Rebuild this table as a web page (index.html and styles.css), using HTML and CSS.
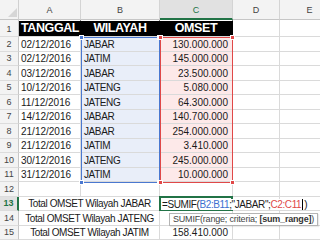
FILE: index.html
```html
<!DOCTYPE html>
<html>
<head>
<meta charset="utf-8">
<link rel="stylesheet" href="styles.css">
</head>
<body>
<div class="wrap">
  <div class="sheet">
    <div class="corner"><svg width="18" height="19" viewBox="0 0 18 19"><polygon points="8,17 17,17 17,8" fill="#d6d6d6"/></svg></div>
    <div class="ch">A</div><div class="ch">B</div><div class="ch sel">C</div><div class="ch">D</div><div class="ch">E</div>

    <div class="rh">1</div>
    <div class="c hd">TANGGAL</div><div class="c hd center">WILAYAH</div><div class="c hd center">OMSET</div><div class="c"></div><div class="c"></div>

    <div class="rh">2</div>
    <div class="c">02/12/2016</div><div class="c t rb">JABAR</div><div class="c num rc">130.000.000</div><div class="c"></div><div class="c"></div>
    <div class="rh">3</div>
    <div class="c">02/12/2016</div><div class="c t rb">JATIM</div><div class="c num rc">145.000.000</div><div class="c"></div><div class="c"></div>
    <div class="rh">4</div>
    <div class="c">03/12/2016</div><div class="c t rb">JABAR</div><div class="c num rc">23.500.000</div><div class="c"></div><div class="c"></div>
    <div class="rh">5</div>
    <div class="c">10/12/2016</div><div class="c t rb">JATENG</div><div class="c num rc">5.080.000</div><div class="c"></div><div class="c"></div>
    <div class="rh">6</div>
    <div class="c">11/12/2016</div><div class="c t rb">JATENG</div><div class="c num rc">64.300.000</div><div class="c"></div><div class="c"></div>
    <div class="rh">7</div>
    <div class="c">14/12/2016</div><div class="c t rb">JABAR</div><div class="c num rc">140.700.000</div><div class="c"></div><div class="c"></div>
    <div class="rh">8</div>
    <div class="c">21/12/2016</div><div class="c t rb">JABAR</div><div class="c num rc">254.000.000</div><div class="c"></div><div class="c"></div>
    <div class="rh">9</div>
    <div class="c">21/12/2016</div><div class="c t rb">JATIM</div><div class="c num rc">3.410.000</div><div class="c"></div><div class="c"></div>
    <div class="rh">10</div>
    <div class="c">30/12/2016</div><div class="c t rb">JATENG</div><div class="c num rc">245.000.000</div><div class="c"></div><div class="c"></div>
    <div class="rh">11</div>
    <div class="c">31/12/2016</div><div class="c t rb">JATIM</div><div class="c num rc">10.000.000</div><div class="c"></div><div class="c"></div>

    <div class="rh">12</div>
    <div class="c"></div><div class="c"></div><div class="c"></div><div class="c"></div><div class="c"></div>

    <div class="rh rsel">13</div>
    <div class="c merge t center">Total OMSET Wilayah JABAR</div><div class="c"></div><div class="c"></div><div class="c"></div>
    <div class="rh">14</div>
    <div class="c merge t center">Total OMSET Wilayah JATENG</div><div class="c"></div><div class="c"></div><div class="c"></div>
    <div class="rh">15</div>
    <div class="c merge t center">Total OMSET Wilayah JATIM</div><div class="c num">158.410.000</div><div class="c"></div><div class="c"></div>
  </div>

  <div class="layer">
    <div class="range range-b"><i class="hdl tl"></i><i class="hdl tr"></i><i class="hdl bl"></i><i class="hdl br"></i></div>
    <div class="range range-c"><i class="hdl tl"></i><i class="hdl tr"></i><i class="hdl bl"></i><i class="hdl br"></i></div>
    <div class="active"></div>
    <div class="editor">=SUMIF(<span class="ref-b">B2:B11</span>;"JABAR";<span class="ref-c">C2:C11</span><span class="caret"></span>)</div>
    <div class="tip">SUMIF(range; criteria; <b>[sum_range]</b>)</div>
  </div>
</div>
</body>
</html>
```

FILE: styles.css
```css
* { box-sizing: border-box; }
html, body { margin: 0; padding: 0; background: #fff; overflow: hidden; }
body {
  font-family: "Liberation Sans", Arial, sans-serif;
  font-size: 10px;
  color: #1a1a1a;
}

.wrap {
  display: grid;
  width: 320px;
  height: 242px;
  overflow: hidden;
}

.sheet,
.layer {
  grid-area: 1 / 1;
  display: grid;
  grid-template-columns: 19px 62px 79px 73px 47px 60px;
  grid-template-rows: 20px 17px repeat(14, 14.5px);
}

.layer { pointer-events: none; }

/* header cells */
.corner {
  background: #f3f3f3;
  border-right: 1px solid #d0d0d0;
  border-bottom: 1px solid #c6c6c6;
}
.corner svg { display: block; }

.ch {
  background: #f3f3f3;
  border-right: 1px solid #d4d4d4;
  border-bottom: 1px solid #c6c6c6;
  display: flex;
  align-items: flex-end;
  justify-content: center;
  padding-bottom: 3px;
  font-size: 9px;
  line-height: 11px;
  color: #444;
}
.ch.sel {
  background: #e1e1e1;
  color: #217346;
  border-bottom: 2px solid #217346;
  padding-bottom: 2px;
}

.rh {
  background: #f3f3f3;
  border-right: 1px solid #c6c6c6;
  border-bottom: 1px solid #dcdcdc;
  display: flex;
  align-items: flex-end;
  justify-content: center;
  font-size: 9px;
  line-height: 11px;
  padding-bottom: 1px;
  color: #444;
}
.rh.rsel {
  background: #e1e1e1;
  color: #217346;
  font-weight: bold;
  border-right: 2px solid #217346;
}

/* grid cells */
.c {
  border-right: 1px solid #dadada;
  border-bottom: 1px solid #dadada;
  display: flex;
  align-items: flex-end;
  padding: 0 2px;
  line-height: 12px;
  white-space: nowrap;
  overflow: hidden;
}
.center { justify-content: center; }
.num { justify-content: flex-end; padding-right: 4px; }
.t { letter-spacing: -0.4px; padding-left: 3px; }
.merge { grid-column: span 2; }

.hd {
  background: #000;
  color: #fff;
  font-weight: bold;
  font-size: 12.5px;
  line-height: 14px;
  letter-spacing: -0.4px;
  border-top: 1px solid #fff;
  border-right-color: #000;
  padding-bottom: 1px;
}

.rb { background: #e9eef9; }
.rc { background: #fde9e9; }

/* overlays */
.range {
  position: relative;
  border: 1px solid;
  margin-bottom: -1px;
}
.range-b { grid-column: 3; grid-row: 3 / 13; border-color: #4a78d0; }
.range-c { grid-column: 4; grid-row: 3 / 13; border-color: #e04848; }

.hdl {
  position: absolute;
  width: 5px;
  height: 5px;
  border: 1px solid #fff;
}
.range-b .hdl { background: #4a78d0; }
.range-c .hdl { background: #e04848; }
.hdl.tl { left: -3px; top: -3px; }
.hdl.tr { right: -3px; top: -3px; }
.hdl.bl { left: -3px; bottom: -3px; }
.hdl.br { right: -3px; bottom: -3px; }

.active {
  grid-column: 4;
  grid-row: 14;
  border: 2px solid #217346;
  margin: -1px 0 0 -1px;
}

.editor {
  grid-column: 4 / 7;
  grid-row: 14;
  justify-self: start;
  align-self: center;
  margin: 1px 0 0 1px;
  background: #fff;
  padding: 0 1px;
  line-height: 11px;
  letter-spacing: -0.4px;
  white-space: nowrap;
  color: #1a1a1a;
  position: relative;
}
.ref-b { color: #3d6fd0; }
.ref-c { color: #e04848; }
.caret {
  display: inline-block;
  width: 1px;
  height: 11px;
  background: #000;
  vertical-align: top;
  margin: 0 1px;
}

.tip {
  grid-column: 4 / 7;
  grid-row: 15;
  justify-self: start;
  align-self: start;
  margin: 1.5px 0 0 9px;
  height: 13px;
  background: #fff;
  border: 1px solid #b4b4b4;
  padding: 0 3px;
  font-size: 9px;
  line-height: 11px;
  letter-spacing: -0.2px;
  color: #444;
  white-space: nowrap;
  box-shadow: 1px 1px 1px rgba(0,0,0,0.08);
}
.tip b { color: #333; }
```
